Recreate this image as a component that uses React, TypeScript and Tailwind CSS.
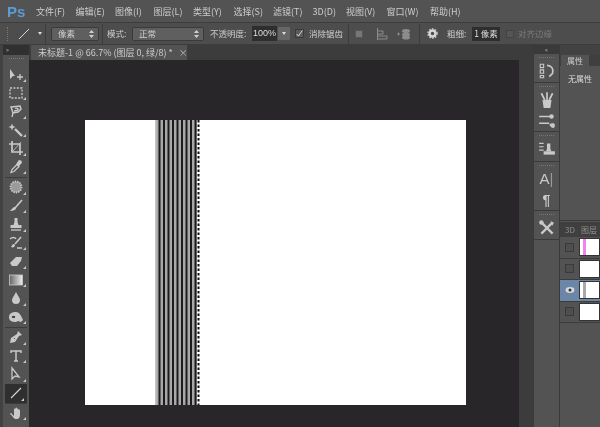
import React from "react";

const C = "#c9c9c9";
type IconProps = { children: React.ReactNode; s?: number };
const I = ({ children, s = 16 }: IconProps) => (
  <svg width={s} height={s} viewBox="0 0 16 16" fill="none" stroke={C} strokeWidth="1.3">
    {children}
  </svg>
);

const tools: (React.ReactNode | "sep" | "sep2")[] = [
  <I key="move"><path d="M2 3v10l3-3 2 0z" fill={C} stroke="none" /><path d="M9 11h6M12 8v6" /></I>,
  <I key="marquee"><rect x="2" y="3" width="12" height="10" strokeDasharray="2 1.4" /></I>,
  <I key="lasso"><path d="M3 4l9-1 1 3-3 3-5 1z" strokeWidth="1.5" /><path d="M7 5.5c3-1 4 1 2 2l-3 .5M5 10l-1 4" strokeWidth="1.3" /></I>,
  <I key="wand"><path d="M7 7l7 7" strokeWidth="2.4" /><path d="M4 1.5l1 2.5 2.5 1-2.500 1L4 8.500 3 6 .5 5 3 4z" fill={C} stroke="none" /></I>,
  <I key="crop"><path d="M4 1v11h11M1 4h11v11" strokeWidth="1.7" /><path d="M13 2L5 11" strokeWidth="0.8" /></I>,
  <I key="drop"><path d="M3 13.500l1-3 5-5 2 2-5 5z" fill="none" /><path d="M9 5l2-3c1-1 3 1 2 2l-2.500 2.500z" fill={C} /></I>,
  "sep",
  <I key="heal"><circle cx="8" cy="8" r="5.500" fill="#9a9a9a" stroke={C} strokeDasharray="1.400 1" strokeWidth="1.800" /></I>,
  <I key="brush"><path d="M14 2L7 10" strokeWidth="1.600" /><path d="M7 9c-2 0-3 2-5 4 3 0 6-1 6-3z" fill={C} stroke="none" /></I>,
  <I key="stamp"><path d="M6.500 2h3v4l1 3H5.500l1-3z" fill={C} stroke="none" /><rect x="2.500" y="9" width="11" height="3" fill={C} stroke="none" /><path d="M3 14h10" /></I>,
  <I key="hist"><path d="M13 2L7 9" strokeWidth="1.600" /><path d="M6 9c-2 0-2 2-3 3 2 1 4 0 4-2z" fill={C} stroke="none" /><path d="M2 4c2-2 5-2 6 0M9 13h5" /></I>,
  <I key="eraser"><path d="M2 10l6-6h6l-1 4-4 5H4z" fill={C} stroke="none" /></I>,
  <I key="grad">
    <defs><linearGradient id="g"><stop offset="0" stopColor="#666" /><stop offset="1" stopColor="#eee" /></linearGradient></defs>
    <rect x="1.500" y="3" width="13" height="10" fill="url(#g)" stroke={C} strokeWidth="0.800" />
  </I>,
  <I key="water"><path d="M8 2c2 4 4 6 4 8a4 4 0 0 1-8 0c0-2 2-4 4-8z" fill={C} stroke="none" /></I>,
  <I key="smudge"><path d="M1 8c0-4 4-5 7-5s5 3 7 8l-2 2-3-1-2 1C4 13 1 12 1 8z" fill={C} stroke="none" /><ellipse cx="5.500" cy="8" rx="2.500" ry="1.800" fill="#444" /></I>,
  "sep",
  <I key="pen"><path d="M10 2l4 4-3 1-4 6-5 1 1-5 6-4z" fill={C} stroke="none" /><circle cx="6.500" cy="9.500" r="1.200" fill="#444" /></I>,
  <I key="t"><path d="M3 5V3h10v2M8 3v10M6 13h4" strokeWidth="1.500" /></I>,
  <I key="path"><path d="M4 2v11l3-3 4 1z" fill="#444" /></I>,
  "active",
  "sep2",
  <I key="hand"><path d="M3 8l3 3V4a.8.8 0 0 1 1.500 0V3a.8.8 0 0 1 1.500 0v1a.8.8 0 0 1 1.500 0v1a.8.8 0 0 1 1.500 0v5c0 2-1 4-3 4H7c-2-1-3-4-5-5 0-1 1-1 1-1z" fill={C} stroke="none" /></I>,
];

const Corner = () => (
  <span className="absolute right-[3px] bottom-[2px] w-0 h-0 border-l-[3px] border-l-transparent border-b-[3px] border-b-[#c9c9c9]" />
);

const Updown = () => (
  <svg width="5" height="8" viewBox="0 0 5 8" fill="#d0d0d0"><path d="M2.500 0L5 3H0zM2.500 8L0 5h5z" /></svg>
);

const Select = ({ text, w }: { text: string; w: string }) => (
  <div className={`${w} h-[14px] flex items-center justify-between pl-[6px] pr-[4px] rounded-[2px] bg-[#5f5f5f] border border-[#3a3a3a] text-[#d0d0d0]`}>
    <span>{text}</span>
    <Updown />
  </div>
);

const Sep = ({ ml }: { ml: string }) => <div className={`${ml} w-px h-[20px] bg-[#3c3c3c] shrink-0`} />;

const menu: [string, string][] = [
  ["文件(F)", "w-[28px]"], ["编辑(E)", "w-[28px]"], ["图像(I)", "w-[27px]"], ["图层(L)", "w-[28px]"],
  ["类型(Y)", "w-[29px]"], ["选择(S)", "w-[28px]"], ["滤镜(T)", "w-[28px]"], ["3D(D)", "w-[22px]"],
  ["视图(V)", "w-[29px]"], ["窗口(W)", "w-[32px]"], ["帮助(H)", "w-[30px]"],
];

const docks: { h: string; items: React.ReactNode[] }[] = [
  {
    h: "h-[29px]",
    items: [
      <I key="a" s={18}><path d="M2 2h3v3H2zM2 7h3v3H2zM2 12h3v2H2z" strokeWidth="1" /><path d="M8 3c4 0 6 3 5 7l-3 3" strokeWidth="1.500" /></I>,
    ],
  },
  {
    h: "h-[49px]",
    items: [
      <I key="b" s={18}><path d="M4 8h8l-1 7H5z" fill={C} stroke="none" /><path d="M3 2l3 6M8 1v7M13 2l-3 6" strokeWidth="1.500" /></I>,
      <I key="c" s={18}><path d="M1 4h10M1 10h9" strokeWidth="1.500" /><circle cx="12" cy="4" r="2" fill={C} stroke="none" /><path d="M10 11c2-1 5-2 5 1s-3 3-5-1z" fill={C} stroke="none" /></I>,
    ],
  },
  {
    h: "h-[30px]",
    items: [
      <I key="d" s={18}><path d="M1 3h4M1 6h4M1 9h4" strokeWidth="1" /><path d="M8 3h3v5l1 2H7l1-2z" fill={C} stroke="none" /><rect x="5" y="10" width="10" height="3" fill={C} stroke="none" /></I>,
    ],
  },
  {
    h: "h-[49px]",
    items: [
      <span key="e" className="text-[15px] leading-[18px] text-[#c9c9c9] font-['Liberation_Sans',sans-serif]">A<span className="font-light text-[#999]">|</span></span>,
      <span key="f" className="text-[14px] leading-[18px] font-bold text-[#c9c9c9] font-['Liberation_Sans',sans-serif]">¶</span>,
    ],
  },
  {
    h: "h-[29px]",
    items: [
      <I key="g" s={18}><path d="M3 3l10 10M13 3L3 13" strokeWidth="2" /><circle cx="3" cy="3" r="2" fill={C} stroke="none" /><path d="M11 2l3 1-1 3z" fill={C} stroke="none" /></I>,
    ],
  },
];

const layers = [
  { on: false, stripe: "bg-[#ee82ee]" },
  { on: false, stripe: "" },
  { on: true, stripe: "bg-[#a9a9a9]" },
  { on: false, stripe: "" },
];

const Grip = () => <div className="w-[15px] h-[2px] mx-auto border-y border-dotted border-[#777] border-b-0" />;

export default function App() {
  return (
    <div className="w-[600px] h-[427px] overflow-hidden flex flex-col bg-[#535353] text-[8.500px] leading-none text-[#cfcfcf] font-['Noto_Sans_CJK_SC','Liberation_Sans',sans-serif] blur-[0.4px]">
      {/* menu */}
      <div className="h-[22px] shrink-0 flex items-center bg-[#535353] pl-[7px]">
        <span className="w-[29px] text-[15px] font-bold text-[#5d9bd4] font-['Liberation_Sans',sans-serif]">Ps</span>
        <div className="flex items-center gap-[11.500px] text-[9px]">
          {menu.map(([t, w]) => (
            <span key={t} className={`${w} whitespace-nowrap text-[#cdcdcd]`}>{t}</span>
          ))}
        </div>
      </div>
      {/* options */}
      <div className="h-[23px] shrink-0 flex items-center bg-[#4d4d4d] border-y border-[#3d3d3d] pl-[7px] whitespace-nowrap">
        <div className="w-[2px] h-[14px] border-l border-dotted border-[#777]" />
        <svg className="ml-[9px]" width="12" height="12" viewBox="0 0 12 12" stroke="#d8d8d8" strokeWidth="1"><path d="M1 11L11 1" /></svg>
        <span className="ml-[8px] w-0 h-0 border-x-[2.500px] border-x-transparent border-t-[3px] border-t-[#ddd]" />
        <Sep ml="ml-[3px]" />
        <div className="ml-[5px]"><Select text="像素" w="w-[48px]" /></div>
        <Sep ml="ml-[3px]" />
        <span className="ml-[4px] w-[25px]">模式:</span>
        <Select text="正常" w="w-[72px]" />
        <span className="ml-[6px] w-[42px]">不透明度:</span>
        <div className="w-[25px] h-[15px] flex items-center justify-center bg-[#2e2e2e] text-[#dcdcdc] text-[9px] font-['Liberation_Sans',sans-serif]">100%</div>
        <div className="ml-[1px] w-[12px] h-[13px] flex items-center justify-center bg-[#666] rounded-[1px]">
          <span className="w-0 h-0 border-x-[2.500px] border-x-transparent border-t-[3px] border-t-[#ddd]" />
        </div>
        <div className="ml-[5px] w-[9px] h-[9px] bg-[#5a5a5a] border border-[#3a3a3a] flex items-center justify-center">
          <svg width="10" height="10" viewBox="0 0 10 10" fill="none" stroke="#e4e4e4" strokeWidth="1.300"><path d="M1 5l2.500 3L9 0" /></svg>
        </div>
        <span className="ml-[5px] w-[34px]">消除锯齿</span>
        <Sep ml="ml-[5px]" />
        <div className="ml-[6px] w-[8px] h-[8px] bg-[#777] border border-[#555]" />
        <svg className="ml-[13px]" width="12" height="12" viewBox="0 0 12 12" fill="none" stroke="#8c8c8c"><path d="M1.500 0v12M1 3h6v3H1M1 8h10v3H1" /></svg>
        <svg className="ml-[9px]" width="14" height="12" viewBox="0 0 14 12" fill="#8c8c8c"><path d="M0 6h3M1.500 4.500v3" stroke="#8c8c8c" fill="none" /><ellipse cx="9" cy="3" rx="4" ry="2" /><ellipse cx="9" cy="6.500" rx="4" ry="2" /><ellipse cx="9" cy="9.500" rx="4" ry="2" /></svg>
        <Sep ml="ml-[8px]" />
        <svg className="ml-[7px]" width="11" height="11" viewBox="0 0 11 11" fill="none" stroke="#d8d8d8"><circle cx="5.500" cy="5.500" r="3" strokeWidth="2.500" /><circle cx="5.500" cy="5.500" r="4.700" strokeWidth="1.200" strokeDasharray="1.500 1.500" /></svg>
        <span className="ml-[9px] w-[25px]">粗细:</span>
        <div className="w-[28px] h-[14px] flex items-center justify-center bg-[#2e2e2e] text-[#dcdcdc]">1 像素</div>
        <div className="ml-[6px] w-[8px] h-[8px] bg-[#555] border border-[#444]" />
        <span className="ml-[4px] text-[#7c7c7c]">对齐边缘</span>
      </div>

      {/* body */}
      <div className="flex-1 min-h-0 flex">
        <div className="w-[3px] bg-[#424242] shrink-0" />
        {/* left tools */}
        <div className="w-[26px] shrink-0 bg-[#535353] flex flex-col">
          <div className="h-[10px] bg-[#303030] flex items-center pl-[3px]">
            <span className="text-[6px] text-[#bbb]">»</span>
          </div>
          <div className="mt-[3px] mb-[5px]"><Grip /></div>
          {tools.map((t, i) =>
            t === "sep" ? (
              <div key={i} className="h-px mx-[2px] my-[0.500px] bg-[#3c3c3c] shrink-0" />
            ) : t === "sep2" ? (
              <div key={i} className="h-px mx-[2px] bg-[#3c3c3c] shrink-0" />
            ) : t === "active" ? (
              <div key={i} className="relative h-[19px] mx-[2px] shrink-0 flex items-center justify-center bg-[#2f2f2f] rounded-[1px]">
                <svg width="12" height="12" viewBox="0 0 12 12" stroke="#d8d8d8" strokeWidth="1.100"><path d="M1 11L11 1" /></svg>
                <Corner />
              </div>
            ) : (
              <div key={i} className="relative h-[18.500px] shrink-0 flex items-center justify-center">
                {t}
                <Corner />
              </div>
            )
          )}
        </div>

        {/* document */}
        <div className="w-[490px] shrink-0 flex flex-col bg-[#282628]">
          <div className="h-[15px] shrink-0 flex items-end bg-[#3c3c3c] pl-[2px]">
            <div className="w-[156px] h-[15px] flex items-center gap-[6px] bg-[#535353] pl-[7px] text-[9px] text-[#cccccc] whitespace-nowrap">
              <span>未标题-1 @ 66.7% (图层 0, 绿/8) *</span>
              <span className="text-[#bbb]">×</span>
            </div>
          </div>
          <div className="pl-[56px] pt-[60px]">
            <div className="w-[381px] h-[285px] bg-white flex">
              <svg className="ml-[70px]" width="46" height="285" viewBox="0 0 46 285">
                <rect x="0" y="0" width="43" height="285" fill="#a8a8a8" />
                <rect x="0" y="0" width="1.500" height="285" fill="#c4c4c4" />
                {[3.5, 8, 12.5, 17, 21.5, 26, 30.5, 35, 39.5].map((x) => (
                  <rect key={x} x={x} y="0" width="2" height="285" fill="#1c1c1c" />
                ))}
                <rect x="42" y="0" width="4" height="285" fill="#ffffff" />
                <line x1="43.500" y1="0" x2="43.500" y2="285" stroke="#111" strokeWidth="2" strokeDasharray="2.500 2" />
              </svg>
            </div>
          </div>
        </div>

        <div className="w-[14px] shrink-0 bg-[#3c3c3c]" />
        {/* dock */}
        <div className="w-[27px] shrink-0 flex flex-col bg-[#535353] border-x border-[#3a3a3a]">
          <div className="h-[9px] bg-[#3a3a3a] flex items-center justify-center text-[6px] text-[#bbb]">«</div>
          {docks.map((d, i) => (
            <div key={i} className={`${d.h} shrink-0 flex flex-col items-center border-b border-[#3a3a3a] pt-[3px] gap-[3px]`}>
              <Grip />
              {d.items.map((it, j) => (
                <div key={j} className="h-[18px] flex items-center justify-center">{it}</div>
              ))}
            </div>
          ))}
        </div>

        {/* panels */}
        <div className="flex-1 min-w-0 flex flex-col">
          <div className="h-[10px] bg-[#424242] shrink-0" />
          <div className="h-[11px] shrink-0 flex bg-[#3f3f3f] pl-[1px]">
            <div className="w-[28px] h-full flex items-center justify-center bg-[#535353] text-[8px] text-[#d0d0d0]">属性</div>
          </div>
          <div className="h-[155px] shrink-0 bg-[#535353] pl-[8px] pt-[9px] text-[8px] text-[#dcdcdc] border-b border-[#3a3a3a]">无属性</div>
          <div className="h-[15px] mt-[1px] shrink-0 flex items-center bg-[#3f3f3f] text-[#8f8f8f] pl-[5px] gap-[6px] whitespace-nowrap text-[8px]">
            <span>3D</span>
            <span>图层</span>
          </div>
          {layers.map((l, i) => (
            <div key={i} className={`h-[21.500px] shrink-0 flex items-center border-b border-[#3c3c3c] ${l.on ? "bg-[#6c86a8]" : "bg-[#535353]"}`}>
              <div className="w-[19px] shrink-0 flex justify-center">
                {l.on ? (
                  <svg width="10" height="8" viewBox="0 0 10 8"><ellipse cx="5" cy="4" rx="4.500" ry="3" fill="#d8d8d8" /><circle cx="5" cy="4" r="1.500" fill="#333" /></svg>
                ) : (
                  <div className="w-[9px] h-[9px] bg-[#4e4e4e] border border-[#3a3a3a]" />
                )}
              </div>
              <div className="flex-1 h-[18px] bg-white border border-[#333] flex">
                {l.stripe && <div className={`ml-[3px] w-[3px] ${l.stripe}`} />}
              </div>
            </div>
          ))}
          <div className="flex-1 bg-[#535353]" />
        </div>
      </div>
    </div>
  );
}
